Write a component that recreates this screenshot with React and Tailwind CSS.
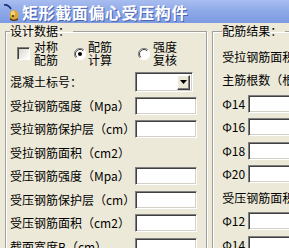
import React from "react";

const sunken =
  "border border-t-[#808080] border-l-[#808080] border-b-white border-r-white shadow-[inset_1px_1px_0_#404040,inset_-1px_-1px_0_#d4d0c8] bg-white";

function TextBox({ className = "" }) {
  return <div className={`${sunken} h-[18px] ${className}`} />;
}

function Combo() {
  return (
    <div className={`${sunken} h-[20px] w-[58px] flex items-center justify-end pr-[2px]`}>
      <div className="w-[13px] h-[15px] bg-[#ece9d8] border border-t-white border-l-white border-b-[#404040] border-r-[#404040] shadow-[inset_-1px_-1px_0_#808080] flex items-center justify-center">
        <svg width="7" height="4" viewBox="0 0 7 4">
          <path d="M0 0h7L3.5 4z" fill="#000" />
        </svg>
      </div>
    </div>
  );
}

function Radio({ checked }) {
  return (
    <svg width="12" height="12" viewBox="0 0 12 12" className="shrink-0">
      <circle cx="6" cy="6" r="5.5" fill="#fff" />
      <path d="M10 2A5.5 5.5 0 0 0 2 10" stroke="#808080" fill="none" />
      <path d="M9.2 2.8A4.5 4.5 0 0 0 2.8 9.2" stroke="#404040" fill="none" />
      <path d="M2 10A5.5 5.5 0 0 0 10 2" stroke="#fff" fill="none" />
      {checked && <circle cx="6" cy="6" r="2" fill="#000" />}
    </svg>
  );
}

function Check() {
  return (
    <div className="w-[13px] h-[13px] shrink-0 border border-t-[#808080] border-l-[#808080] border-b-white border-r-white shadow-[inset_1px_1px_0_#404040] bg-linear-to-br from-[#d8d5c8] to-white" />
  );
}

function TitleIcon() {
  return (
    <svg width="16" height="18" viewBox="0 0 16 18" className="shrink-0">
      <path d="M1 2 Q5 1 8 6" stroke="#1a2f7a" strokeWidth="1.6" fill="none" />
      <ellipse cx="11" cy="12" rx="4.5" ry="5" fill="#d9a63a" />
      <ellipse cx="10" cy="10.5" rx="2.2" ry="2.4" fill="#f4d27a" />
      <path d="M7 15 Q11 18.5 15 15 L15 17 Q11 19 7 17z" fill="#5a3a10" />
      <circle cx="10" cy="13" r="1" fill="#3a2608" />
    </svg>
  );
}

const leftRows = [
  { label: "混凝土标号：", ctl: "combo" },
  { label: "受拉钢筋强度（Mpa）", ctl: "text" },
  { label: "受拉钢筋保护层（cm）", ctl: "text" },
  { label: "受拉钢筋面积（cm2）", ctl: null },
  { label: "受压钢筋强度（Mpa）", ctl: "text" },
  { label: "受压钢筋保护层（cm）", ctl: "text" },
  { label: "受压钢筋面积（cm2）", ctl: "text" },
  { label: "截面宽度B（cm）", ctl: "text" },
];

const rightRows = [
  { label: "受拉钢筋面积（cm2）" },
  { label: "主筋根数（根）" },
  { label: "Φ14", input: true },
  { label: "Φ16", input: true },
  { label: "Φ18", input: true },
  { label: "Φ20", input: true },
  { label: "受压钢筋面积（cm2）" },
  { label: "Φ12", input: true },
  { label: "Φ14", input: true },
];

export default function App() {
  return (
    <div className="w-[289px] h-[248px] overflow-hidden bg-[#ece9d8] flex flex-col font-['Noto_Sans_CJK_SC',sans-serif] text-[12px] text-black">
      <div className="h-[23px] shrink-0 flex items-center gap-[3px] pl-[3px] bg-linear-to-b from-[#a8bdf0] via-[#8ea9e8] to-[#7d9ae2]">
        <TitleIcon />
        <span className="text-white font-bold text-[16px] leading-[20px] tracking-[0.6px] [text-shadow:1px_1px_0_#4a63b0]">
          矩形截面偏心受压构件
        </span>
      </div>
      <div className="flex flex-1 gap-[5px] pl-[5px] pt-[1px]">
        <fieldset className="w-[196px] shrink-0 border border-[#a0a0a0] shadow-[inset_1px_1px_0_#fff,1px_1px_0_#fff] h-[260px]">
          <legend className="ml-[4px] pr-[3px] leading-[14px]">设计数据：</legend>
          <div className="flex flex-col pt-[3px]">
            <div className="h-[25px] flex items-center">
              <div className="ml-[11px]">
                <Check />
              </div>
              <div className="ml-[4px] leading-[12.5px] w-[24px]">对称<br />配筋</div>
              <div className="ml-[16px]">
                <Radio checked />
              </div>
              <div className="ml-[2px] leading-[12.5px] w-[24px]">配筋<br />计算</div>
              <div className="ml-[26px]">
                <Radio />
              </div>
              <div className="ml-[3px] leading-[12.5px] w-[24px]">强度<br />复核</div>
            </div>
            <div className="flex flex-col mt-[4.5px]">
              {leftRows.map((r, i) => (
                <div key={i} className="h-[23.5px] flex items-center pl-[4px] pr-[9px]">
                  <span className="flex-1 whitespace-nowrap">{r.label}</span>
                  {r.ctl === "combo" && (
                    <div className="w-[62px] flex">
                      <Combo />
                    </div>
                  )}
                  {r.ctl === "text" && <TextBox className="w-[62px]" />}
                </div>
              ))}
            </div>
          </div>
        </fieldset>
        <fieldset className="w-[130px] shrink-0 border border-[#a0a0a0] shadow-[inset_1px_1px_0_#fff,1px_1px_0_#fff] h-[260px]">
          <legend className="ml-[9px] pr-[3px] leading-[14px]">配筋结果：</legend>
          <div className="flex flex-col pt-[7px]">
            {rightRows.map((r, i) => (
              <div key={i} className="h-[23.5px] flex items-center pl-[9px]">
                <span className={r.input ? "w-[26px] whitespace-nowrap" : "whitespace-nowrap"}>{r.label}</span>
                {r.input && <TextBox className="flex-1" />}
              </div>
            ))}
          </div>
        </fieldset>
      </div>
    </div>
  );
}
